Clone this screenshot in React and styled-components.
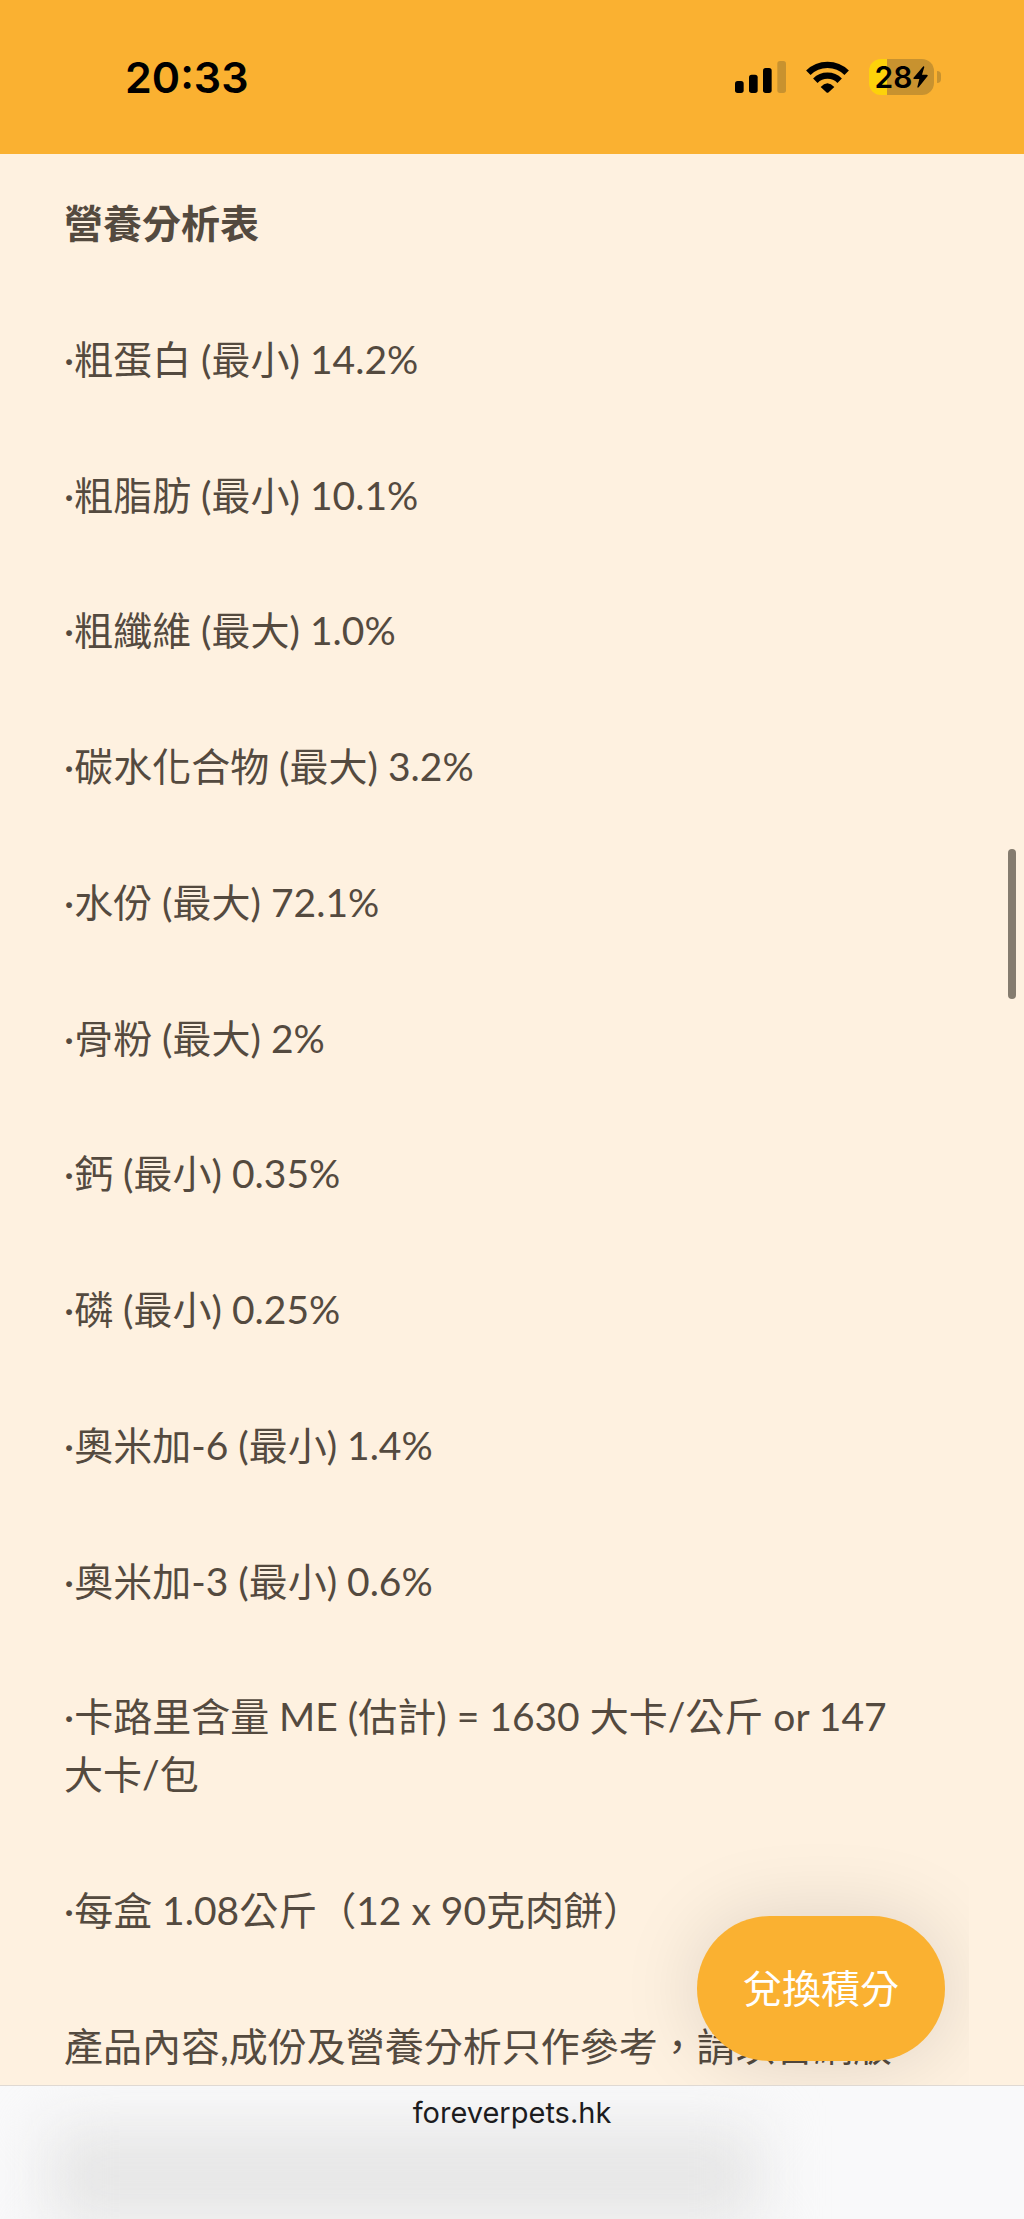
import React from 'react'
import styled, { createGlobalStyle } from 'styled-components';

const GlobalStyle = createGlobalStyle`
    * {
        box-sizing: border-box;
    }
    body {
        margin: 0;
        background: #fef1e0;
    }
`;

const nutrition = [
    '粗蛋白 (最小) 14.2%',
    '粗脂肪 (最小) 10.1%',
    '粗纖維 (最大) 1.0%',
    '碳水化合物 (最大) 3.2%',
    '水份 (最大) 72.1%',
    '骨粉 (最大) 2%',
    '鈣 (最小) 0.35%',
    '磷 (最小) 0.25%',
    '奧米加-6 (最小) 1.4%',
    '奧米加-3 (最小) 0.6%',
    '卡路里含量 ME (估計) = 1630 大卡/公斤 or 147 大卡/包',
    '每盒 1.08公斤（12 x 90克肉餅）',
];

function Signal(){
    return(
        <svg width="51" height="32" viewBox="0 0 153 96" aria-hidden="true">
            <rect x="0" y="60" width="26" height="36" rx="8"/>
            <rect x="42" y="41" width="26" height="55" rx="8"/>
            <rect x="84" y="21" width="26" height="75" rx="8"/>
            <rect x="127" y="0" width="26" height="96" rx="8" fill="#c8922f"/>
        </svg>
    );
}

function Wifi(){
    return(
        <svg width="43" height="32" viewBox="0 0 129 96" aria-hidden="true">
            <g fill="none" stroke="#000" strokeWidth="19">
                <path d="M7 35 A82 82 0 0 1 122 35"/>
                <path d="M28 59 A52 52 0 0 1 101 59"/>
            </g>
            <path d="M44 78 Q64 56 85 78 L68 94 Q64 97 61 94 Z"/>
        </svg>
    );
}

function Bolt(){
    return(
        <svg width="15" height="22" viewBox="0 0 45 66" aria-hidden="true">
            <path d="M31 1 L1 36 Q0 39 4 39 H19 L13 63 Q14 67 17 64 L44 30 Q45 26 41 26 H27 L34 3 Q33 0 31 1 Z"/>
        </svg>
    );
}

export default function App(){
    return(
        <Screen>
            <GlobalStyle/>
            <StatusBar>
                <Clock>20:33</Clock>
                <StatusIcons>
                    <Signal/>
                    <Wifi/>
                    <BatteryWrap>
                        <Battery>28<Bolt/></Battery>
                        <BatteryTip/>
                    </BatteryWrap>
                </StatusIcons>
            </StatusBar>
            <Content>
                <Title>營養分析表</Title>
                {nutrition.map((item) => (
                    <Line key={item}>{`·${item}`}</Line>
                ))}
                <Line>產品內容,成份及營養分析只作參考，請以官網版</Line>
            </Content>
            <ScrollThumb/>
            <RedeemArea>
                <RedeemButton type="button">兌換積分</RedeemButton>
            </RedeemArea>
            <AddressBar>
                <Shade/>
                <Address href="#">foreverpets.hk</Address>
            </AddressBar>
        </Screen>
    );
}

const Screen = styled.div`
    position: relative;
    display: flex;
    flex-direction: column;
    min-height: 100vh;
    overflow: hidden;
    background: #fef1e0;
    color: #544a3f;
    font-family: Lato, 'Noto Sans CJK TC', sans-serif;
`;

const StatusBar = styled.header`
    display: flex;
    justify-content: space-between;
    align-items: center;
    height: 154px;
    padding: 0 83px 0 125px;
    background: #fab131;
    color: #000;
    font-family: Inter, sans-serif;
`;

const Clock = styled.time`
    font-size: 43px;
    font-weight: 600;
`;

const StatusIcons = styled.div`
    display: flex;
    align-items: center;
    gap: 20px;
`;

const BatteryWrap = styled.div`
    display: flex;
    align-items: center;
    gap: 3px;
`;

const Battery = styled.div`
    display: flex;
    justify-content: center;
    align-items: center;
    gap: 1px;
    width: 65px;
    height: 36px;
    border-radius: 12px;
    background: linear-gradient(to right, #fdd20a 28%, #c8922f 28%);
    font-size: 30px;
    font-weight: 600;
`;

const BatteryTip = styled.span`
    width: 4px;
    height: 12px;
    border-radius: 0 4px 4px 0;
    background: #c8922f;
`;

const Content = styled.main`
    flex: 1;
    display: flex;
    flex-direction: column;
    justify-content: space-between;
    padding: 40px 100px 10px 64px;
`;

const Title = styled.h1`
    margin: 0;
    font-size: 39px;
    line-height: 58px;
    font-weight: 700;
`;

const Line = styled.p`
    margin: 0;
    font-size: 39px;
    line-height: 58px;
`;

const ScrollThumb = styled.div`
    position: absolute;
    top: 849px;
    right: 8px;
    width: 8px;
    height: 150px;
    border-radius: 4px;
    background: #857c6f;
`;

const RedeemArea = styled.div`
    position: absolute;
    right: 55px;
    bottom: 134px;
    padding: 100px 24px 24px 100px;
    overflow: hidden;
    pointer-events: none;
`;

const RedeemButton = styled.button`
    display: block;
    height: 145px;
    padding: 0 46px 6px;
    border: 0;
    border-radius: 73px;
    background: #fab131;
    box-shadow: 0 0 80px rgba(0, 0, 0, 0.13);
    color: #fff;
    font-family: inherit;
    font-size: 39px;
    cursor: pointer;
    pointer-events: auto;
`;

const AddressBar = styled.footer`
    position: relative;
    display: flex;
    justify-content: center;
    height: 134px;
    padding-top: 10px;
    border-top: 1px solid #dfd9d3;
    background: #f9f9fa;
    overflow: hidden;
`;

const Shade = styled.div`
    position: absolute;
    top: 40px;
    left: 48px;
    right: 264px;
    height: 100px;
    background: #e6e6e6;
    filter: blur(30px);
`;

const Address = styled.a`
    position: relative;
    color: #1c1c1e;
    font-family: Inter, sans-serif;
    font-size: 29px;
    line-height: 34px;
    text-decoration: none;
`;
